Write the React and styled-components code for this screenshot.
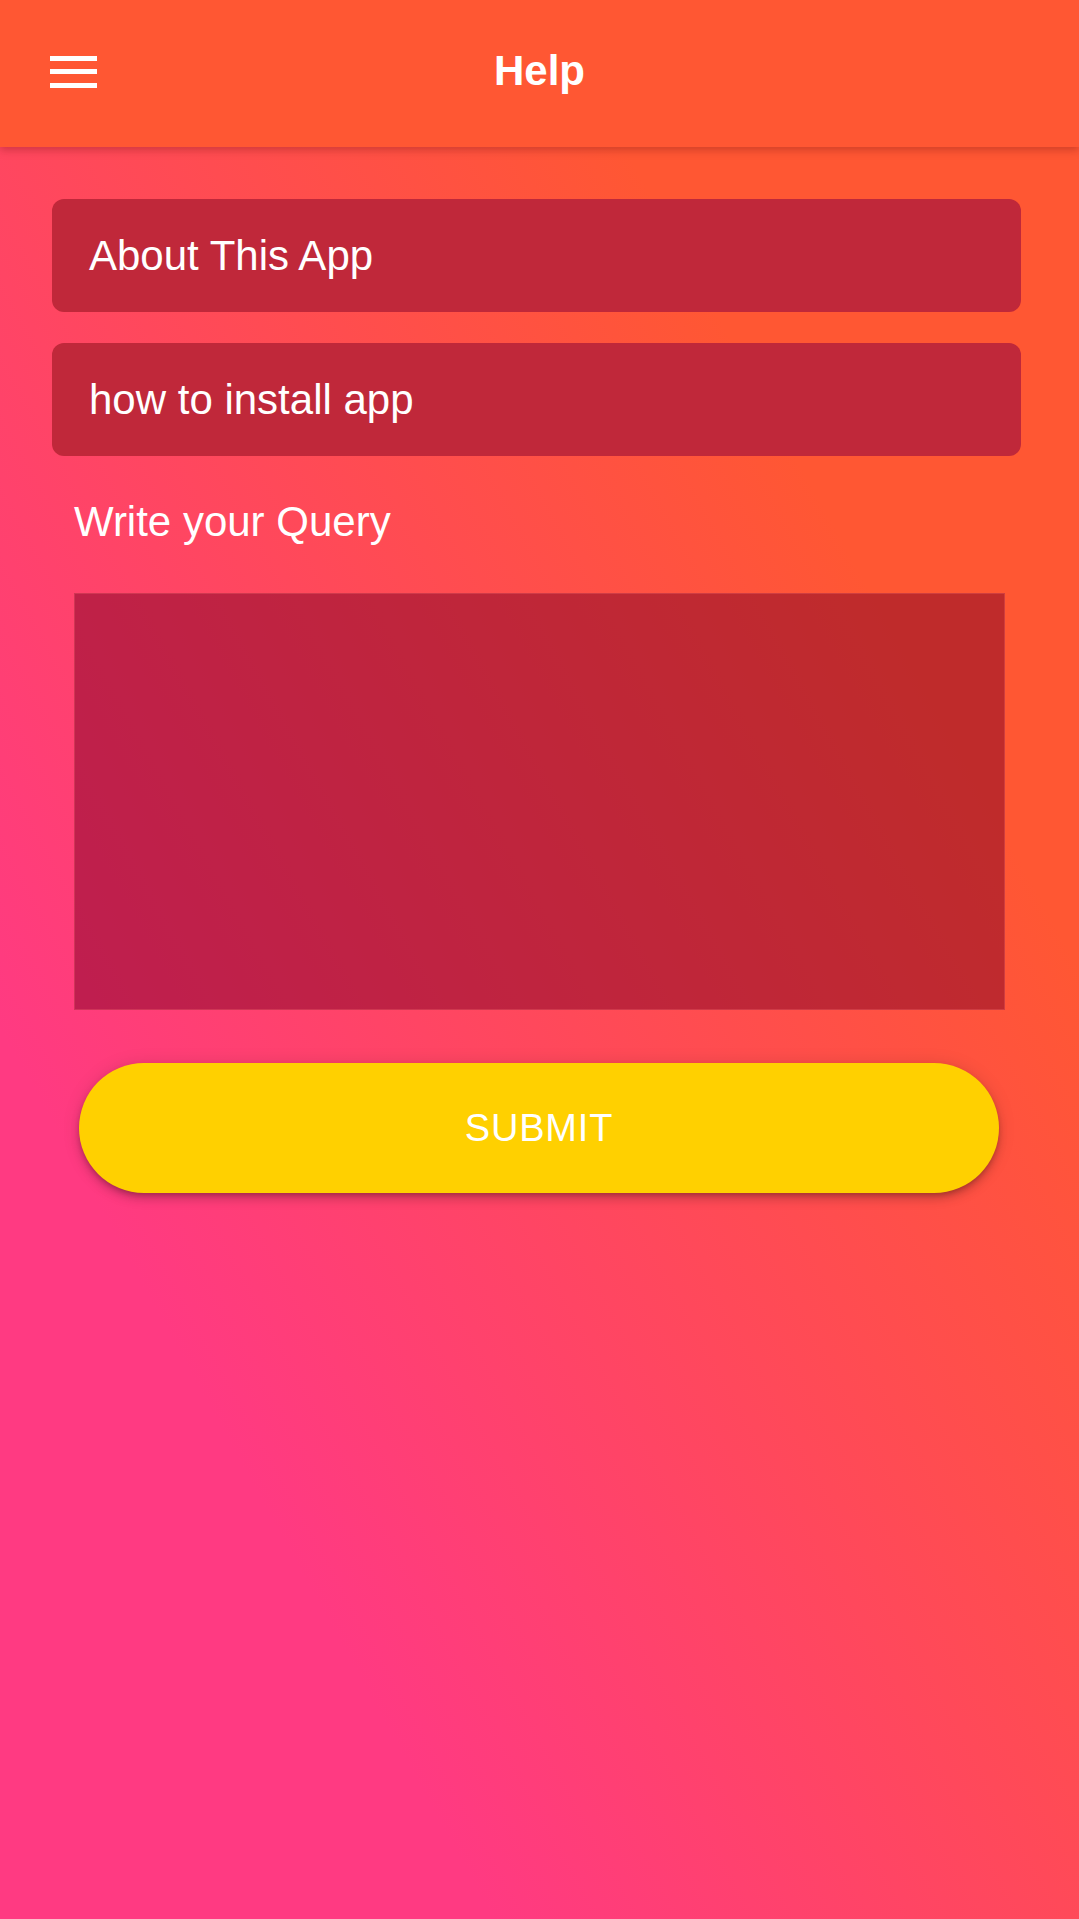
import React from "react";
import styled, { createGlobalStyle } from "styled-components";

const Global = createGlobalStyle`
  html, body { margin: 0; padding: 0; height: 100%; }
  body { font-family: "Liberation Sans", Arial, sans-serif; }
  #root { min-height: 100%; }
  * { box-sizing: border-box; }
`;

const Page = styled.div`
  min-height: 100vh;
  background: linear-gradient(61deg, #ff3a82 23%, #ff5733 75%);
  display: flex;
  flex-direction: column;
`;

const Header = styled.header`
  height: 147px;
  background: #ff5733;
  box-shadow: 0 3px 8px rgba(120, 20, 20, 0.35);
  display: grid;
  grid-template-columns: 1fr auto 1fr;
  align-items: center;
  padding: 0 50px;
  position: relative;
  z-index: 1;
`;

const MenuButton = styled.button`
  justify-self: start;
  width: 47px;
  height: 32px;
  padding: 0;
  margin-top: -4px;
  border: none;
  background: transparent;
  display: flex;
  flex-direction: column;
  justify-content: space-between;
  cursor: pointer;
`;

const Bar = styled.span`
  display: block;
  height: 5px;
  width: 100%;
  background: #ffffff;
`;

const Title = styled.h1`
  margin: -5px 0 0;
  font-size: 42px;
  font-weight: 700;
  color: #ffffff;
  letter-spacing: 0;
`;

const Content = styled.main`
  display: flex;
  flex-direction: column;
  padding: 52px 58px 0 52px;
`;

const Card = styled.div`
  height: 113px;
  background: #c0283a;
  border-radius: 12px;
  display: flex;
  align-items: center;
  padding-left: 37px;
  color: #ffffff;
  font-size: 42px;
  margin-bottom: ${(p) => p.$gap || 0}px;
`;

const Label = styled.label`
  display: block;
  margin: 42px 0 0 22px;
  font-size: 42px;
  color: #ffffff;
  line-height: 48px;
`;

const QueryBox = styled.textarea`
  display: block;
  margin: 47px 16px 0 22px;
  height: 417px;
  resize: none;
  background: rgba(128, 0, 36, 0.5);
  border: 1px solid rgba(255, 120, 120, 0.25);
  border-radius: 0;
  color: #ffffff;
  font-family: inherit;
  font-size: 36px;
  padding: 16px;
  outline: none;
`;

const SubmitButton = styled.button`
  margin: 53px 22px 0 27px;
  height: 130px;
  border: none;
  border-radius: 65px;
  background: #ffd000;
  color: #ffffff;
  font-family: "Liberation Sans", Arial, sans-serif;
  font-size: 38px;
  letter-spacing: 0.8px;
  text-transform: uppercase;
  box-shadow: 0 3px 5px -1px rgba(0, 0, 0, 0.2), 0 6px 10px 0 rgba(0, 0, 0, 0.14),
    0 1px 18px 0 rgba(0, 0, 0, 0.12);
  cursor: pointer;
`;

export default function App() {
  return (
    <>
      <Global />
      <Page>
        <Header>
          <MenuButton aria-label="menu">
            <Bar />
            <Bar />
            <Bar />
          </MenuButton>
          <Title>Help</Title>
          <span />
        </Header>
        <Content>
          <Card $gap={31}>About This App</Card>
          <Card>how to install app</Card>
          <Label htmlFor="query">Write your Query</Label>
          <QueryBox id="query" />
          <SubmitButton>Submit</SubmitButton>
        </Content>
      </Page>
    </>
  );
}
